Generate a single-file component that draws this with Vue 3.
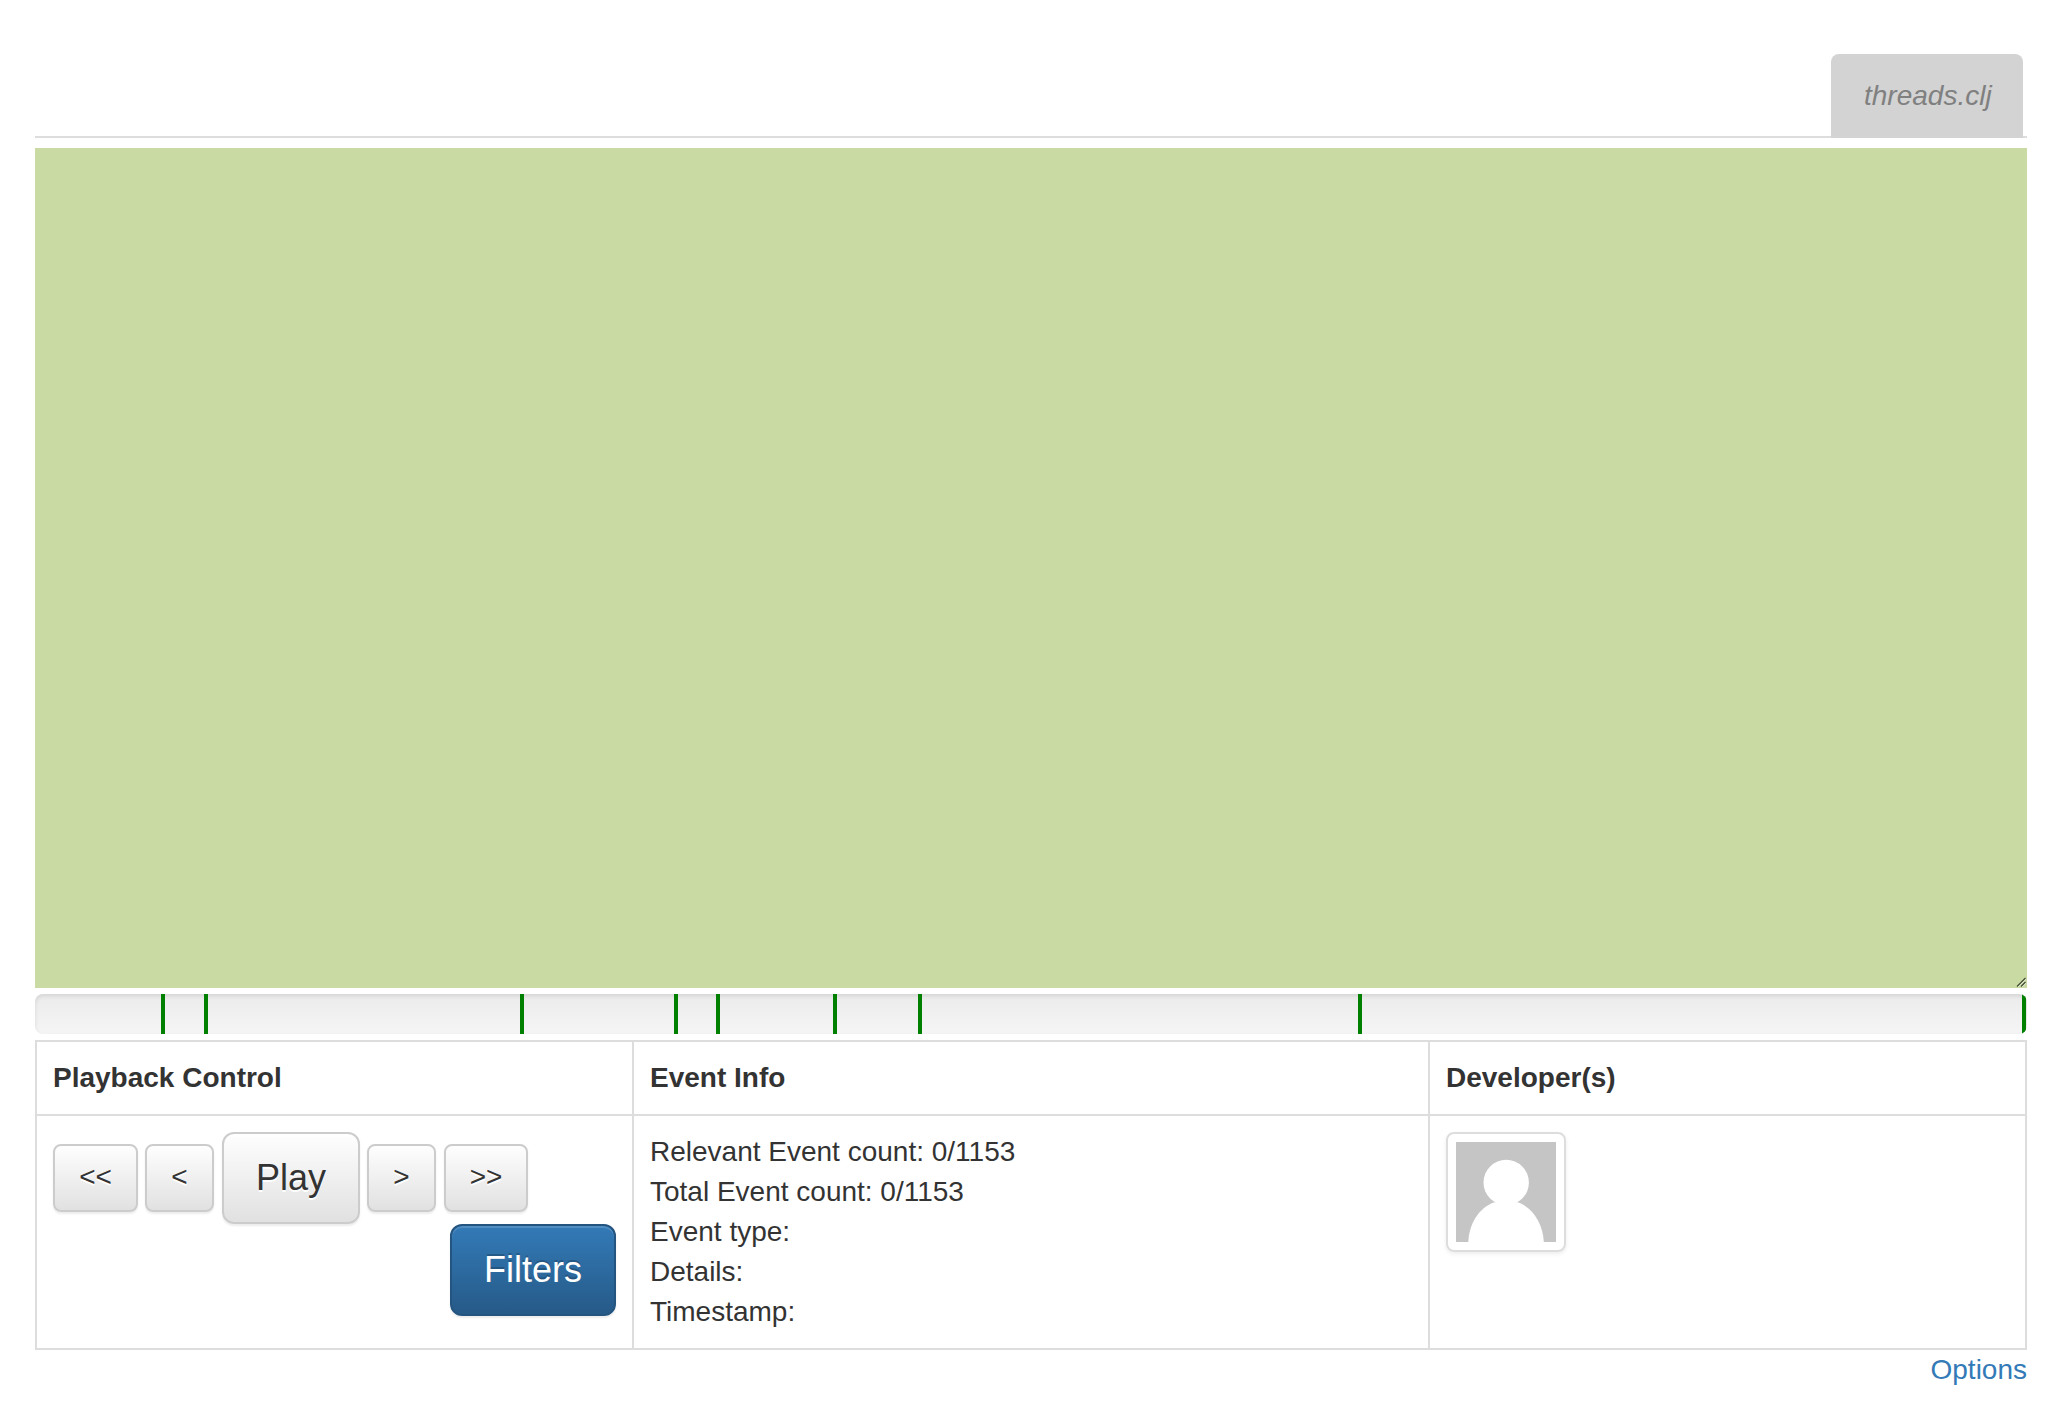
<script setup>
const files = [{ name: 'threads.clj' }]
const marks = [126, 169, 485, 639, 681, 798, 883, 1323, 1987]
const info = [
  { label: 'Relevant Event count:', value: '0/1153' },
  { label: 'Total Event count:', value: '0/1153' },
  { label: 'Event type:', value: '' },
  { label: 'Details:', value: '' },
  { label: 'Timestamp:', value: '' },
]
</script>

<template>
  <main class="playback">
    <ul class="tabs">
      <li v-for="file in files" :key="file.name" class="tab"><em>{{ file.name }}</em></li>
    </ul>

    <section class="editor">
      <svg class="grip" width="10" height="10" viewBox="0 0 10 10">
        <path d="M2 10 10 2M6 10 10 6" stroke="#fff" stroke-width="1" opacity=".6" />
        <path d="M1 9.500 9.500 1M5 9.500 9.500 5" stroke="#3f472f" stroke-width="1.1" />
      </svg>
    </section>

    <div class="progress">
      <span v-for="m in marks" :key="m" class="mark" :style="{ left: m + 'px' }"></span>
    </div>

    <section class="panel">
      <div class="col control">
        <h2 class="head">Playback Control</h2>
        <div class="cell">
          <div class="buttons">
            <button class="btn first">&lt;&lt;</button>
            <button class="btn prev">&lt;</button>
            <button class="btn large play">Play</button>
            <button class="btn next">&gt;</button>
            <button class="btn last">&gt;&gt;</button>
          </div>
          <div class="filters">
            <button class="btn large primary">Filters</button>
          </div>
        </div>
      </div>
      <div class="col info">
        <h2 class="head">Event Info</h2>
        <div class="cell">
          <div v-for="row in info" :key="row.label">{{ row.label }} {{ row.value }}</div>
        </div>
      </div>
      <div class="col devs">
        <h2 class="head">Developer(s)</h2>
        <div class="cell">
          <div class="thumb">
            <svg width="100" height="100" viewBox="0 0 100 100">
              <rect width="100" height="100" fill="#c5c5c5" />
              <circle cx="50.2" cy="40.5" r="22.7" fill="#fff" />
              <path d="M12.300 100C13 82 23 65.500 38.500 60.300H61.800C77 65.500 87 82 87.800 100Z" fill="#fff" />
            </svg>
          </div>
        </div>
      </div>
    </section>

    <footer class="foot"><a class="options">Options</a></footer>
  </main>
</template>

<style>
body {
  margin: 0;
  background: #fff;
}
</style>

<style scoped>
* {
  box-sizing: border-box;
}
.playback {
  width: 1992px;
  margin-left: 35px;
  padding-top: 54px;
  font: 28px/40px "Liberation Sans", Arial, sans-serif;
  color: #333;
}
.tabs {
  display: flex;
  justify-content: flex-end;
  height: 84px;
  margin: 0 0 10px;
  padding: 0 4px 0 0;
  list-style: none;
  background: linear-gradient(#ddd, #ddd) bottom / 100% 2px no-repeat;
}
.tab {
  width: 192px;
  padding: 22px 0 22px 33px;
  border-radius: 8px 8px 0 0;
  background: #d3d3d3;
  color: #808080;
}
.editor {
  display: flex;
  justify-content: flex-end;
  align-items: flex-end;
  height: 840px;
  padding: 1px;
  background: #c9daa2;
}
.grip {
  fill: none;
}
.progress {
  position: relative;
  height: 40px;
  margin: 6px 0;
  overflow: hidden;
  border-radius: 8px;
  background: linear-gradient(#ebebeb, #f5f5f5);
  box-shadow: inset 0 2px 4px rgba(0, 0, 0, 0.1);
}
.mark {
  position: absolute;
  top: 0;
  width: 4px;
  height: 40px;
  background: #008000;
}
.panel {
  display: flex;
  height: 310px;
  border: 2px solid #ddd;
}
.col + .col {
  border-left: 2px solid #ddd;
}
.control {
  width: 595px;
}
.info {
  width: 796px;
}
.devs {
  flex: 1;
}
.head {
  margin: 0;
  height: 74px;
  padding: 16px;
  border-bottom: 2px solid #ddd;
  font-size: 28px;
  line-height: 40px;
  font-weight: bold;
}
.cell {
  padding: 16px;
}
.buttons {
  display: flex;
  align-items: center;
  height: 92px;
}
.btn {
  height: 68px;
  padding: 0 0 2px;
  border: 2px solid #ccc;
  border-radius: 8px;
  background: linear-gradient(#fff, #e0e0e0) border-box;
  box-shadow: inset 0 2px 0 rgba(255, 255, 255, 0.15), 0 2px 2px rgba(0, 0, 0, 0.075);
  color: #333;
  font: 28px/40px "Liberation Sans", Arial, sans-serif;
  text-shadow: 0 2px 0 #fff;
}
.large {
  height: 92px;
  padding: 0;
  border-radius: 12px;
  font-size: 36px;
  line-height: 48px;
}
.first {
  width: 85px;
}
.last {
  width: 84px;
}
.prev,
.next {
  width: 69px;
}
.prev {
  margin: 0 8px 0 7px;
}
.play {
  width: 138px;
}
.next {
  margin: 0 8px 0 7px;
}
.filters {
  display: flex;
  justify-content: flex-end;
}
.primary {
  width: 166px;
  border-color: #245580;
  background: linear-gradient(#337ab7, #265a88);
  color: #fff;
  text-shadow: 0 -2px 0 rgba(0, 0, 0, 0.2);
}
.thumb {
  width: 120px;
  height: 120px;
  padding: 8px;
  border: 2px solid #ddd;
  border-radius: 8px;
  box-shadow: 0 2px 4px rgba(0, 0, 0, 0.075);
}
.thumb svg {
  display: block;
}
.foot {
  text-align: right;
}
.options {
  color: #337ab7;
}
</style>
